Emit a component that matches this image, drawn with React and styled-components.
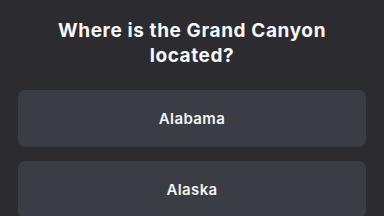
import React from 'react'
import styled, { createGlobalStyle } from 'styled-components'

const Global = createGlobalStyle`
    html, body {
        margin: 0;
        padding: 0;
        background: #2b2b30;
    }
    body {
        font-family: Inter, "Noto Sans", sans-serif;
        color: #f4f4f5;
    }
`

const Page = styled.div`
    width: 384px;
    height: 216px;
    overflow: hidden;
    background: #2b2b30;
    display: flex;
    flex-direction: column;
    align-items: center;
`

const Question = styled.h1`
    margin: 18px 0 0;
    width: 300px;
    font-size: 19px;
    font-weight: 700;
    letter-spacing: 0.6px;
    line-height: 25px;
    text-align: center;
    color: #f7f7f8;
`

const Options = styled.div`
    margin-top: 22px;
    width: 348px;
    display: flex;
    flex-direction: column;
    gap: 14px;
`

const Option = styled.button`
    height: 57px;
    border: none;
    border-radius: 7px;
    background: #3b3d44;
    color: #f4f4f5;
    font-family: Inter, "Noto Sans", sans-serif;
    font-size: 15px;
    font-weight: 600;
    letter-spacing: 0.4px;
    display: flex;
    align-items: center;
    justify-content: center;
    padding: 0;
`

const answers = ['Alabama', 'Alaska']

const App = () => {
    return (
        <Page>
            <Global />
            <Question>Where is the Grand Canyon located?</Question>
            <Options>
                {answers.map((a) => (
                    <Option key={a}>{a}</Option>
                ))}
            </Options>
        </Page>
    )
}

export default App
